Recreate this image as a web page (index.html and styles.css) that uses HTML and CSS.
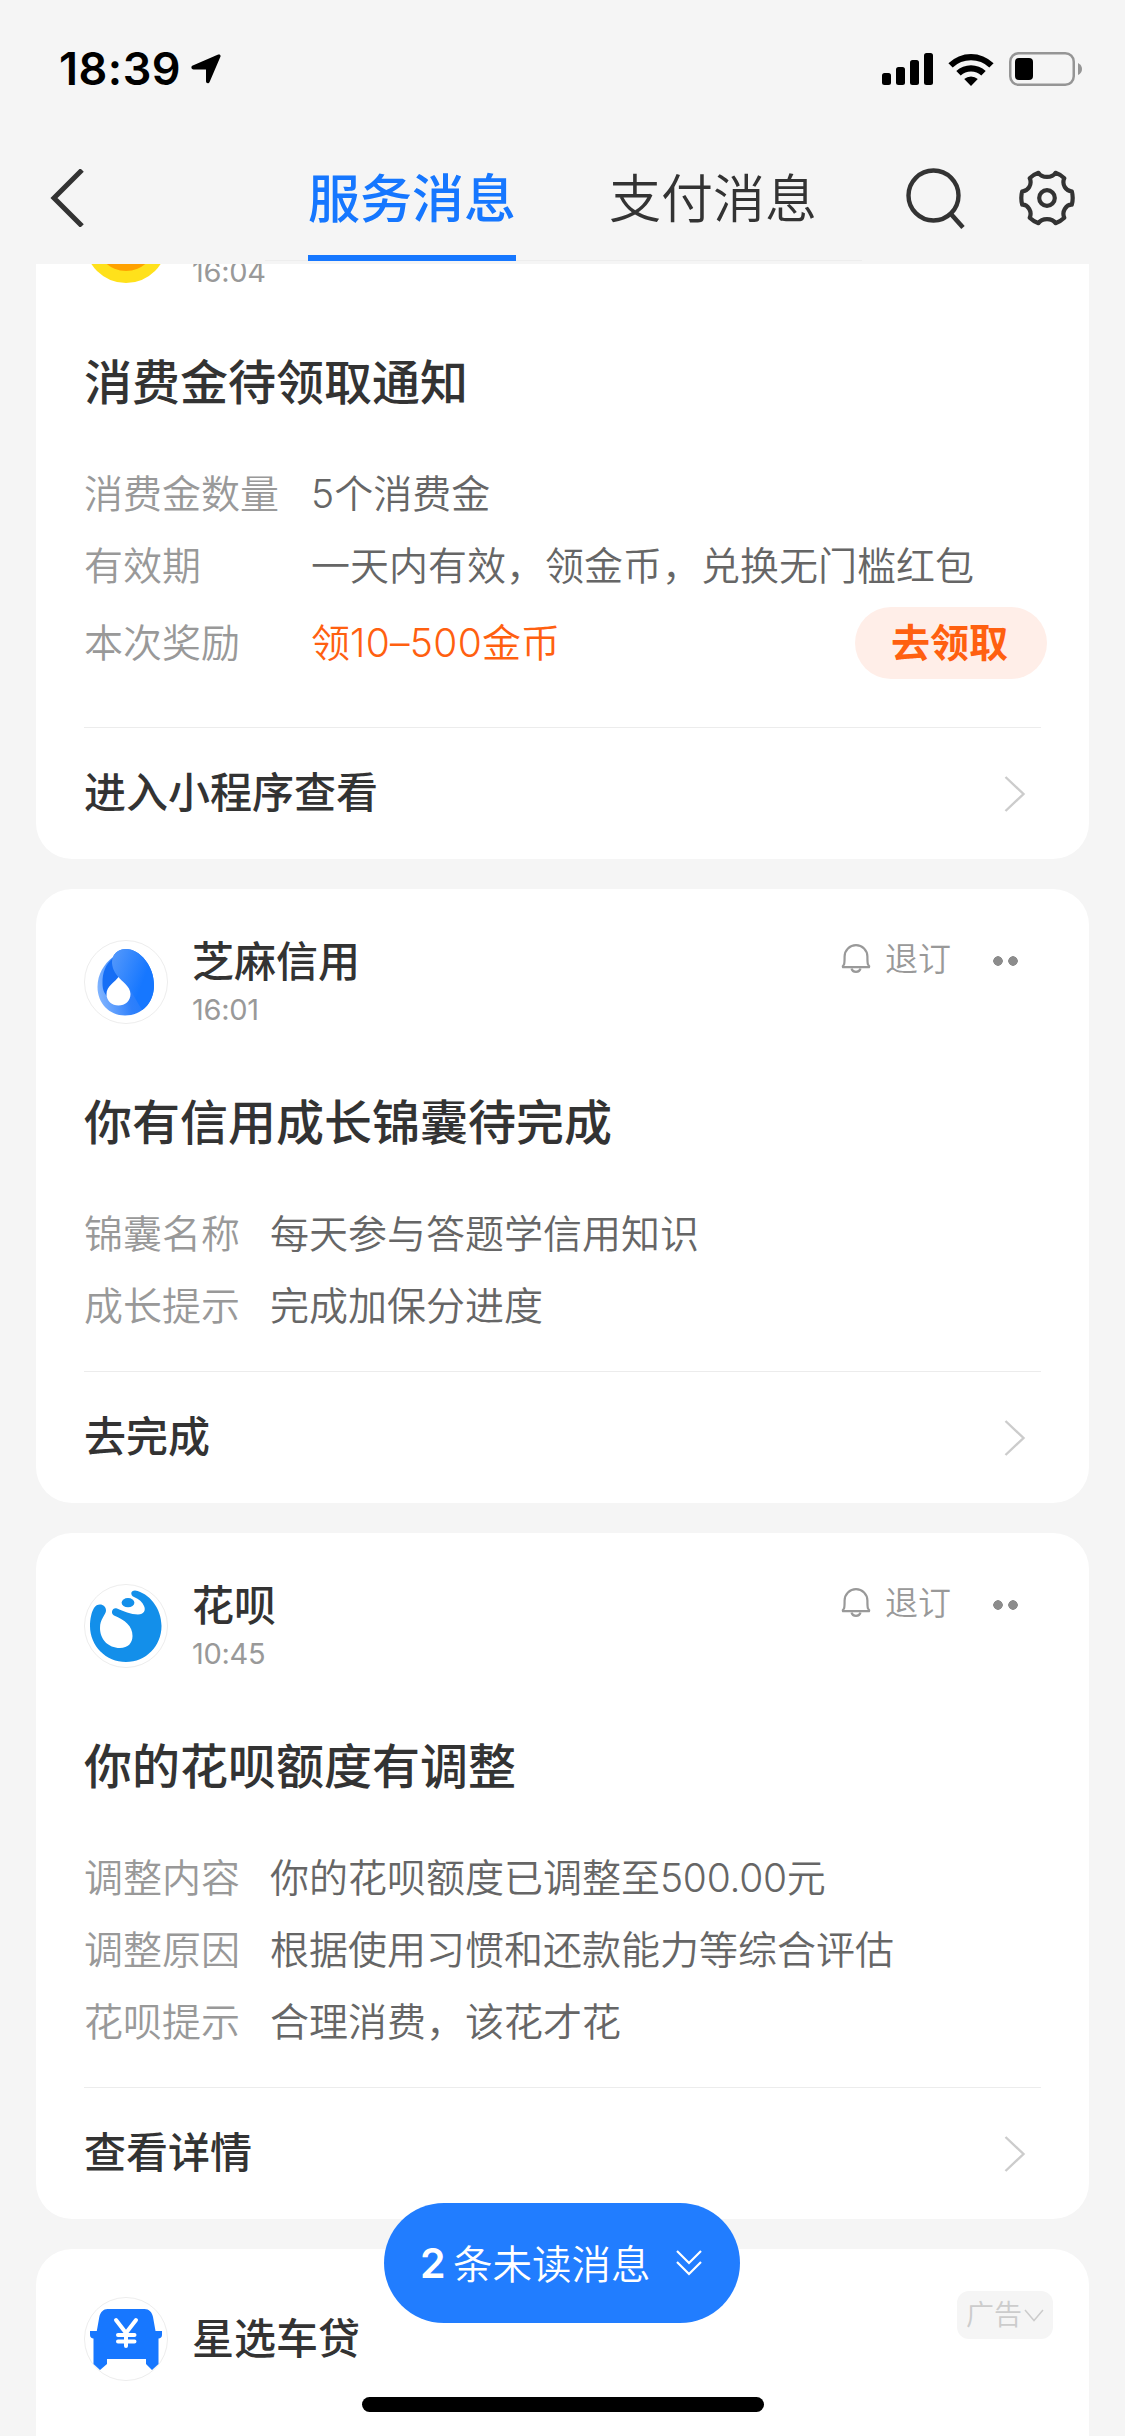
FILE: index.html
```html
<!DOCTYPE html>
<html lang="zh-CN">
<head>
<meta charset="utf-8">
<title>服务消息</title>
<link rel="stylesheet" href="styles.css">
</head>
<body>
<svg class="defs" width="0" height="0" aria-hidden="true">
  <symbol id="bell" viewBox="0 0 30 32"><path d="M3 22.5C3.6 21 3.6 19 3.6 14.500A11.400 11.400 0 0 1 26.400 14.500C26.400 19 26.400 21 27 22.500Q28.600 24 28 25.200H2Q1.400 24 3 22.500Z" fill="none" stroke="currentColor" stroke-width="2.200" stroke-linejoin="round"/><path d="M10.500 26.500a4.600 4.200 0 0 0 9 0" fill="none" stroke="currentColor" stroke-width="2.200"/></symbol>
  <symbol id="arrow" viewBox="0 0 22 36"><path d="M1.500 1L19.500 18L1.500 35" fill="none" stroke="currentColor" stroke-width="2.400"/></symbol>
</svg>
<div class="screen">
  <div class="status">
    <span class="clock">18:39</span>
    <svg class="locate" width="30" height="30" viewBox="0 0 30 30"><path d="M27.200 .6C28.800 -.1 30.100 1.200 29.400 2.800L18.600 28C17.700 30 15 29.500 15 27.300V15.500H2.600C.1 15.500 -.4 12.500 1.800 11.600Z"/></svg>
    <svg class="signal" width="51" height="32" viewBox="0 0 51 32"><rect y="20" width="9" height="12" rx="2.500"/><rect x="14" y="14" width="9" height="18" rx="2.500"/><rect x="28" y="7" width="9" height="25" rx="2.500"/><rect x="42" width="9" height="32" rx="2.500"/></svg>
    <svg class="wifi" width="46" height="33" viewBox="0 0 46 33"><path d="M.4 10.200A32.500 32.500 0 0 1 45.600 10.200L41.300 14.600A26.200 26.200 0 0 0 4.700 14.600ZM8.300 18.100A21.400 21.400 0 0 1 37.700 18.100L33.300 22.500A15 15 0 0 0 12.700 22.500ZM16.200 26A10.200 10.200 0 0 1 29.800 26L23 33Z"/></svg>
    <svg class="battery" width="74" height="34" viewBox="0 0 74 34"><rect x="1.250" y="1.250" width="63.500" height="31.500" rx="8.500" fill="none" stroke="#959595" stroke-width="2.500"/><rect x="6" y="6" width="18" height="22" rx="4"/><path d="M69 11Q73 13 73 17T69 23Z" fill="#959595"/></svg>
  </div>
  <nav class="nav">
    <svg class="back" width="34" height="58" viewBox="0 0 34 58"><path d="M32 1L4 29L32 57" fill="none" stroke="#333" stroke-width="5"/></svg>
    <div class="tabs">
      <span class="tab tab-on">服务消息</span>
      <span class="tab">支付消息</span>
    </div>
    <svg class="search" width="60" height="62" viewBox="0 0 60 62"><circle cx="27.500" cy="27.500" r="25" fill="none" stroke="#333" stroke-width="4.400"/><path d="M44.500 45.500L57 59.500" stroke="#333" stroke-width="4.600"/></svg>
    <svg class="gear" width="56" height="56" viewBox="0 0 56 56"><g fill="none" stroke="#333" stroke-width="4.200" stroke-linejoin="round"><path d="M19.500 2.800C23 8.300 33 8.300 36.500 2.800Q41.500 4.500 45.300 8.200C42.500 14.500 47 21.500 52.800 21.300Q54.600 28 52.800 34.700C47 34.500 42.500 41.500 45.300 47.800Q41.500 51.500 36.500 53.200C33 47.700 23 47.700 19.500 53.200Q14.500 51.500 10.700 47.800C13.500 41.500 9 34.500 3.200 34.700Q1.400 28 3.200 21.300C9 21.500 13.500 14.500 10.700 8.200Q14.500 4.500 19.500 2.800Z"/><circle cx="28" cy="28" r="7.800"/></g></svg>
  </nav>
  <main class="feed">
    <article class="card">
      <header class="head">
        <svg class="avatar" viewBox="0 0 84 84"><circle cx="42" cy="42" r="41" fill="#ffe11b"/><circle cx="42" cy="41" r="30" fill="#ffa200"/></svg>
        <div class="who"><span class="name"></span><span class="time">16:04</span></div>
      </header>
      <h2 class="title">消费金待领取通知</h2>
      <div class="rows">
        <div class="row"><span class="label label-wide">消费金数量</span><span class="value">5个消费金</span></div>
        <div class="row"><span class="label label-wide">有效期</span><span class="value">一天内有效，领金币，兑换无门槛红包</span></div>
        <div class="row row-action"><span class="label label-wide">本次奖励</span><span class="value hot">领<span class="num">10–500</span>金币</span><span class="claim">去领取</span></div>
      </div>
      <footer class="foot"><span>进入小程序查看</span><svg class="arrow"><use href="#arrow"/></svg></footer>
    </article>

    <article class="card">
      <header class="head">
        <svg class="avatar" viewBox="0 0 84 84">
          <defs>
            <linearGradient id="shell" x1="0" y1=".5" x2="1" y2=".3"><stop offset="0" stop-color="#7db2ff"/><stop offset=".5" stop-color="#2f80fb"/><stop offset="1" stop-color="#1677ff"/></linearGradient>
            <linearGradient id="fold" x1="0" y1=".2" x2=".7" y2=".6"><stop offset="0" stop-color="#5096fb"/><stop offset="1" stop-color="#1677ff"/></linearGradient>
          </defs>
          <circle cx="42" cy="42" r="41.500" fill="#fff" stroke="#ededed"/>
          <path d="M29 17C20 24 13.500 34 13.500 47C13.500 63 25 75.500 41 75.500C58 75.500 70 63 70 45C70 26 56 9 42 9C36 9 31 12 29 17Z" fill="url(#shell)"/>
          <path d="M29 18C21 25 18.500 33 18.500 43C18.500 50 20.500 54 24 57L36 39C31 33 28 26 29 18Z" fill="#166ef5"/>
          <path d="M28 23C28 14 34 9 42 9C56 9 70 26 70 45C70 57 65 65 58 70L44 46C40 40 29 36 28 23Z" fill="url(#fold)"/>
          <path d="M34.500 37C37 41 46.500 46 46.500 54C46.500 61 41 65.500 34.500 65.500S22.500 61 22.500 54C22.500 46 31 42 34.500 37Z" fill="#fff"/>
        </svg>
        <div class="who"><span class="name">芝麻信用</span><span class="time">16:01</span></div>
        <div class="tools"><svg class="bell"><use href="#bell"/></svg><span>退订</span><i class="dots"></i></div>
      </header>
      <h2 class="title">你有信用成长锦囊待完成</h2>
      <div class="rows">
        <div class="row"><span class="label">锦囊名称</span><span class="value">每天参与答题学信用知识</span></div>
        <div class="row"><span class="label">成长提示</span><span class="value">完成加保分进度</span></div>
      </div>
      <footer class="foot"><span>去完成</span><svg class="arrow"><use href="#arrow"/></svg></footer>
    </article>

    <article class="card">
      <header class="head">
        <svg class="avatar" viewBox="0 0 84 84">
          <circle cx="42" cy="42" r="41.500" fill="#fff" stroke="#ededed"/>
          <path d="M51 6.500C65 9 77.500 24 77.500 42C77.500 62 62 78 42 78S6 62 6 42C6 35 7.500 28 10 24C13.500 18 22.500 20 22 27C21.500 31 16 35 16 44C16 55 24 64 36 64C44 64 48.500 59 48.500 52C48.500 42 41 36 30 31.500C26 29 28.500 23 33 24.500C39 27 47 30.500 54 30.500C60 30.500 62 26 60 22C58.500 18 55 15 50 13C46 11 46.500 6.500 51 6.500Z" fill="#138fea"/>
          <ellipse cx="44" cy="18.700" rx="6.400" ry="4.600" fill="#138fea"/>
        </svg>
        <div class="who"><span class="name">花呗</span><span class="time">10:45</span></div>
        <div class="tools"><svg class="bell"><use href="#bell"/></svg><span>退订</span><i class="dots"></i></div>
      </header>
      <h2 class="title">你的花呗额度有调整</h2>
      <div class="rows">
        <div class="row"><span class="label">调整内容</span><span class="value">你的花呗额度已调整至<span class="amount">500.00</span>元</span></div>
        <div class="row"><span class="label">调整原因</span><span class="value">根据使用习惯和还款能力等综合评估</span></div>
        <div class="row"><span class="label">花呗提示</span><span class="value">合理消费，该花才花</span></div>
      </div>
      <footer class="foot"><span>查看详情</span><svg class="arrow"><use href="#arrow"/></svg></footer>
    </article>

    <article class="card card-ad">
      <header class="head">
        <svg class="avatar" viewBox="0 0 84 84">
          <circle cx="42" cy="42" r="41.500" fill="#fff" stroke="#ededed"/>
          <path d="M23.500 12H60.500C65 12 68 15 69 20L71.500 34H78V38C78 40 76.500 41.500 74.500 41.500V67L68 73L62 67V62H23V67L16 73L9.500 67V41.500C7.500 41.500 6 40 6 38V34H12.800L15.300 20C16.300 15 19.500 12 23.500 12Z" fill="#1777ff"/>
          <path d="M32 23L42 36L52 23M42 36V49M34 38H50.500M34 44.500H50.500" fill="none" stroke="#fff" stroke-width="4" stroke-linecap="round"/>
        </svg>
        <div class="who who-single"><span class="name">星选车贷</span></div>
        <div class="ad"><span>广告</span><svg width="20" height="13" viewBox="0 0 20 13"><path d="M1 1L10 11.500L19 1" fill="none" stroke="#ccc" stroke-width="1.500"/></svg></div>
      </header>
    </article>
  </main>
  <div class="unread">
    <b>2</b><span>条未读消息</span>
    <svg width="26" height="26" viewBox="0 0 26 26"><path d="M1 1L13 13L25 1M1 12L13 24L25 12" fill="none" stroke="#fff" stroke-width="2.200"/></svg>
  </div>
  <div class="home-bar"></div>
</div>
</body>
</html>
```
FILE: styles.css
```css
* { box-sizing: border-box; }

body {
  margin: 0;
  background: #f5f5f5;
  color: #333;
  font-family: Inter, "Noto Sans CJK SC", sans-serif;
}

.defs { position: absolute; }
svg { display: block; flex: none; }

.screen {
  position: relative;
  display: flex;
  flex-direction: column;
  width: 1125px;
  height: 2436px;
  overflow: hidden;
}

/* status bar */
.status {
  display: flex;
  align-items: center;
  flex: none;
  height: 138px;
  padding: 0 42px 0 59px;
  color: #000;
}
.clock {
  width: 132px;
  font-size: 45px;
  font-weight: 600;
  letter-spacing: .5px;
  line-height: 60px;
  white-space: nowrap;
}
.signal { margin-left: auto; }
.wifi { margin-left: 15px; }
.battery { margin-left: 15px; }

/* navigation */
.nav {
  display: flex;
  flex: none;
  height: 126px;
  padding: 0 50px;
}
.back { margin-top: 31px; }
.tabs {
  display: flex;
  gap: 93px;
  width: 597px;
  height: 123px;
  margin-left: 181px;
  padding-left: 43px;
  border-bottom: 1px solid #ededed;
}
.tab {
  height: 123px;
  font-size: 52px;
  font-weight: 350;
  line-height: 123px;
  white-space: nowrap;
}
.tab-on {
  color: #1677ff;
  font-weight: 500;
  border-bottom: 6px solid #1677ff;
}
.search { margin: 30px 0 0 44px; }
.gear { margin: 32px 0 0 auto; }

/* message feed, scrolled part of the way through its first card */
.feed {
  display: flex;
  flex: 1;
  flex-direction: column;
  gap: 30px;
  min-height: 0;
  padding: 0 36px;
  overflow: hidden;
}
.feed > :first-child { margin-top: -115px; }
.card {
  flex: none;
  padding: 51px 48px 0;
  border-radius: 36px;
  background: #fff;
}
.card-ad {
  height: 240px;
  padding-top: 48px;
}
.head {
  display: flex;
  height: 84px;
}
.avatar {
  width: 84px;
  height: 84px;
}
.who {
  display: flex;
  flex-direction: column;
  margin-left: 24px;
}
.name {
  min-height: 42px;
  font-size: 42px;
  font-weight: 500;
  line-height: 44px;
}
.time {
  margin-top: 10px;
  color: #999;
  font-size: 29px;
  font-weight: 400;
  letter-spacing: -.3px;
  line-height: 36px;
}
.name:empty + .time { margin-top: 12px; }
.who-single { justify-content: center; }
.tools {
  display: flex;
  align-items: center;
  height: 38px;
  margin-left: auto;
  padding-right: 23px;
  color: #999;
  font-size: 33px;
  font-weight: 350;
  line-height: 38px;
}
.bell {
  width: 30px;
  height: 32px;
  margin: -2px 14px 0 0;
}
.dots {
  width: 25px;
  height: 10px;
  margin: 4px 0 0 42px;
  background: radial-gradient(circle at 5px 5px, #8c8c8c 4.500px, transparent 5px) 0 0 / 15px 10px;
}
.title {
  margin: 66px 0 0;
  font-size: 48px;
  font-weight: 500;
  line-height: 66px;
}
.rows { margin: 42px 0 29px; }
.row {
  display: flex;
  align-items: center;
  height: 72px;
  font-size: 39px;
  font-weight: 350;
  line-height: 72px;
  white-space: nowrap;
}
.label {
  width: 186px;
  color: #999;
}
.label-wide { width: 227px; }
.value { color: #666; }
.row-action {
  height: 96px;
  margin-right: -6px;
  padding: 5px 0 19px;
}
.row .hot { color: #ff6010; }
.num { letter-spacing: .3px; }
.amount { letter-spacing: -.3px; }
.claim {
  width: 192px;
  margin-left: auto;
  padding-right: 3px;
  border-radius: 36px;
  background: #ffeee8;
  color: #ff6010;
  font-weight: 700;
  line-height: 72px;
  text-align: center;
}
.foot {
  display: flex;
  align-items: center;
  justify-content: space-between;
  height: 132px;
  padding-right: 15px;
  border-top: 1px solid #ececec;
  font-size: 42px;
  font-weight: 500;
  line-height: 60px;
}
.foot span { margin-top: -2px; }
.arrow {
  width: 22px;
  height: 36px;
  color: #ccc;
}
.ad {
  display: flex;
  align-items: center;
  justify-content: center;
  gap: 2px;
  width: 96px;
  height: 48px;
  margin: -6px -12px 0 auto;
  border-radius: 12px;
  background: #f5f5f5;
  color: #ccc;
  font-size: 28px;
  font-weight: 350;
  line-height: 48px;
}

/* floats over the feed */
.unread {
  position: absolute;
  left: 384px;
  top: 2203px;
  display: flex;
  align-items: center;
  width: 356px;
  height: 120px;
  padding: 0 38px 0 36px;
  border-radius: 60px;
  background: #217dff;
  color: #fff;
  font-size: 39.500px;
  line-height: 60px;
  white-space: nowrap;
}
.unread b {
  width: 33px;
  font-size: 41px;
  font-weight: 600;
}
.unread span {
  margin-top: 3px;
  font-weight: 350;
}
.unread svg { margin-left: auto; }
.home-bar {
  position: absolute;
  left: 362px;
  top: 2397px;
  width: 402px;
  height: 15px;
  border-radius: 8px;
  background: #000;
}
```
